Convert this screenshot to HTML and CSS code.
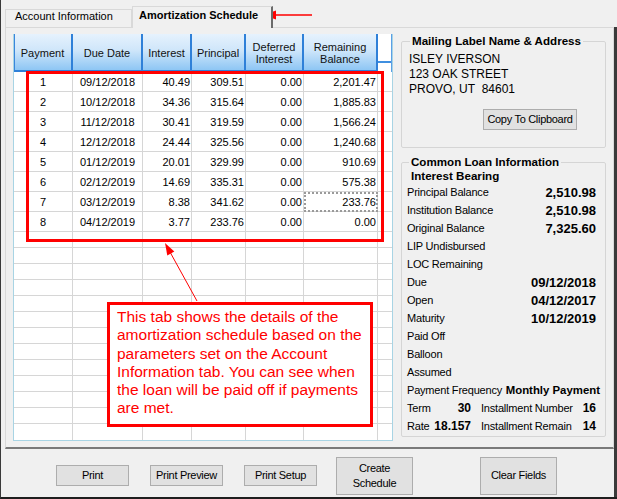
FILE: index.html
```html
<!DOCTYPE html>
<html>
<head>
<meta charset="utf-8">
<title>Amortization Schedule</title>
<link rel="stylesheet" href="styles.css">
</head>
<body>
<div class="frame">
  <div class="tabstrip">
    <div class="tab">Account Information</div>
    <div class="tab active">Amortization Schedule</div>
  </div>
  <div class="body">
    <div class="page">
      <div class="grid">
        <div class="cols ghead">
          <div class="hc first">Payment</div>
          <div class="hc">Due Date</div>
          <div class="hc">Interest</div>
          <div class="hc">Principal</div>
          <div class="hc">Deferred<br>Interest</div>
          <div class="hc">Remaining<br>Balance</div>
          <div class="hx"><div class="hx-box"></div></div>
        </div>
        <div class="cols r20"><div class="c ctr">1</div><div class="c ctr">09/12/2018</div><div class="c">40.49</div><div class="c">309.51</div><div class="c">0.00</div><div class="c">2,201.47</div><div class="c last"></div></div>
        <div class="cols r20"><div class="c ctr">2</div><div class="c ctr">10/12/2018</div><div class="c">34.36</div><div class="c">315.64</div><div class="c">0.00</div><div class="c">1,885.83</div><div class="c last"></div></div>
        <div class="cols r20"><div class="c ctr">3</div><div class="c ctr">11/12/2018</div><div class="c">30.41</div><div class="c">319.59</div><div class="c">0.00</div><div class="c">1,566.24</div><div class="c last"></div></div>
        <div class="cols r20"><div class="c ctr">4</div><div class="c ctr">12/12/2018</div><div class="c">24.44</div><div class="c">325.56</div><div class="c">0.00</div><div class="c">1,240.68</div><div class="c last"></div></div>
        <div class="cols r20"><div class="c ctr">5</div><div class="c ctr">01/12/2019</div><div class="c">20.01</div><div class="c">329.99</div><div class="c">0.00</div><div class="c">910.69</div><div class="c last"></div></div>
        <div class="cols r20"><div class="c ctr">6</div><div class="c ctr">02/12/2019</div><div class="c">14.69</div><div class="c">335.31</div><div class="c">0.00</div><div class="c">575.38</div><div class="c last"></div></div>
        <div class="cols r20"><div class="c ctr">7</div><div class="c ctr">03/12/2019</div><div class="c">8.38</div><div class="c">341.62</div><div class="c">0.00</div><div class="c focus">233.76</div><div class="c last"></div></div>
        <div class="cols r20"><div class="c ctr">8</div><div class="c ctr">04/12/2019</div><div class="c">3.77</div><div class="c">233.76</div><div class="c">0.00</div><div class="c">0.00</div><div class="c last"></div></div>
        <div class="cols r16"><div class="c"></div><div class="c"></div><div class="c"></div><div class="c"></div><div class="c"></div><div class="c"></div><div class="c last"></div></div>
        <div class="cols r16"><div class="c"></div><div class="c"></div><div class="c"></div><div class="c"></div><div class="c"></div><div class="c"></div><div class="c last"></div></div>
        <div class="cols r16"><div class="c"></div><div class="c"></div><div class="c"></div><div class="c"></div><div class="c"></div><div class="c"></div><div class="c last"></div></div>
        <div class="cols r16"><div class="c"></div><div class="c"></div><div class="c"></div><div class="c"></div><div class="c"></div><div class="c"></div><div class="c last"></div></div>
        <div class="cols r16"><div class="c"></div><div class="c"></div><div class="c"></div><div class="c"></div><div class="c"></div><div class="c"></div><div class="c last"></div></div>
        <div class="cols r16"><div class="c"></div><div class="c"></div><div class="c"></div><div class="c"></div><div class="c"></div><div class="c"></div><div class="c last"></div></div>
        <div class="cols r16"><div class="c"></div><div class="c"></div><div class="c"></div><div class="c"></div><div class="c"></div><div class="c"></div><div class="c last"></div></div>
        <div class="cols r16"><div class="c"></div><div class="c"></div><div class="c"></div><div class="c"></div><div class="c"></div><div class="c"></div><div class="c last"></div></div>
        <div class="cols r16"><div class="c"></div><div class="c"></div><div class="c"></div><div class="c"></div><div class="c"></div><div class="c"></div><div class="c last"></div></div>
        <div class="cols r16"><div class="c"></div><div class="c"></div><div class="c"></div><div class="c"></div><div class="c"></div><div class="c"></div><div class="c last"></div></div>
        <div class="cols r16"><div class="c"></div><div class="c"></div><div class="c"></div><div class="c"></div><div class="c"></div><div class="c"></div><div class="c last"></div></div>
        <div class="cols r16"><div class="c"></div><div class="c"></div><div class="c"></div><div class="c"></div><div class="c"></div><div class="c"></div><div class="c last"></div></div>
        <div class="cols r16 endrow"><div class="c"></div><div class="c"></div><div class="c"></div><div class="c"></div><div class="c"></div><div class="c"></div><div class="c last"></div></div>
      </div>

      <div class="side">
        <fieldset class="fs fs1">
          <legend>Mailing Label Name &amp; Address</legend>
          <div class="addr">ISLEY IVERSON<br>123 OAK STREET<br>PROVO, UT&nbsp; 84601</div>
          <button class="btn copy">Copy To Clipboard</button>
        </fieldset>
        <fieldset class="fs fs2">
          <legend>Common Loan Information</legend>
          <div class="ib">Interest Bearing</div>
          <div class="kvs">
            <div class="kv"><span>Principal Balance</span><b class="big">2,510.98</b></div>
            <div class="kv"><span>Institution Balance</span><b class="big">2,510.98</b></div>
            <div class="kv"><span>Original Balance</span><b class="big">7,325.60</b></div>
            <div class="kv"><span>LIP Undisbursed</span></div>
            <div class="kv"><span>LOC Remaining</span></div>
            <div class="kv"><span>Due</span><b class="big">09/12/2018</b></div>
            <div class="kv"><span>Open</span><b class="big">04/12/2017</b></div>
            <div class="kv"><span>Maturity</span><b class="big">10/12/2019</b></div>
            <div class="kv"><span>Paid Off</span></div>
            <div class="kv"><span>Balloon</span></div>
            <div class="kv"><span>Assumed</span></div>
            <div class="kv wide"><span>Payment Frequency</span><b class="sm">Monthly Payment</b></div>
            <div class="kv">
              <div class="half1"><span>Term</span><b class="mid">30</b></div>
              <div class="half2"><span>Installment Number</span><b class="mid">16</b></div>
            </div>
            <div class="kv">
              <div class="half1"><span>Rate</span><b class="mid">18.157</b></div>
              <div class="half2"><span>Installment Remain</span><b class="mid">14</b></div>
            </div>
          </div>
        </fieldset>
      </div>
    </div>

    <div class="buttons">
      <button class="btn small b-print">Print</button>
      <button class="btn small b-preview">Print Preview</button>
      <button class="btn small b-setup">Print Setup</button>
      <button class="btn large b-create">Create<br>Schedule</button>
      <button class="btn large b-clear">Clear Fields</button>
    </div>
  </div>

  <div class="annot">
    <svg class="annot-svg" width="617" height="499" viewBox="0 0 617 499">
      <line x1="274" y1="15" x2="312" y2="15" stroke="#ff0000" stroke-width="1.3"/>
      <polygon points="263,15 276,10.5 276,19.5" fill="#ff0000"/>
      <rect x="27.5" y="72.5" width="355" height="168" fill="none" stroke="#ff0000" stroke-width="3"/>
      <line x1="197" y1="301" x2="170" y2="252" stroke="#ff0000" stroke-width="1"/>
      <polygon points="165,243 167.3,255.4 174.3,251.6" fill="#ff0000"/>
    </svg>
    <div class="callout">This tab shows the details of the<br>amortization schedule based on the<br>parameters set on the Account<br>Information tab. You can see when<br>the loan will be paid off if payments<br>are met.</div>
  </div>
</div>
</body>
</html>
```

FILE: styles.css
```css
* { box-sizing: border-box; }
html, body { margin: 0; padding: 0; }
body {
  width: 617px;
  height: 499px;
  overflow: hidden;
  background: #f0f0f0;
  font-family: "Liberation Sans", Arial, sans-serif;
  color: #000;
}

.frame {
  position: relative;
  width: 617px;
  height: 499px;
  background: #f0f0f0;
  border-left: 1px solid #3a3a3a;
  border-bottom: 2px solid #1e1e1e;
  display: flex;
  flex-direction: column;
}

/* tabs */
.tabstrip {
  height: 27px;
  display: flex;
  align-items: flex-end;
  padding-left: 4px;
  font-size: 11px;
  flex: none;
}
.tab {
  height: 18px;
  width: 127px;
  border: 1px solid #d9d9d9;
  border-bottom: none;
  padding-left: 9px;
  line-height: 12px;
  white-space: nowrap;
  background: #f0f0f0;
}
.tab.active {
  position: relative;
  z-index: 1;
  height: 22px;
  width: 141px;
  margin-bottom: -1px;
  border-right: 2px solid #6b6b6b;
  padding-left: 6px;
  padding-top: 1px;
  line-height: 14px;
  font-weight: bold;
}

.body {
  flex: 1;
  display: flex;
  flex-direction: column;
  border-right: 3px solid #3a3a3a;
}

.page {
  margin-left: 4px;
  display: flex;
  gap: 8px;
  padding: 6px 7px 6px 7px;
  border-top: 1px solid #d9d9d9;
  border-left: 1px solid #d9d9d9;
  border-right: 1px solid #d9d9d9;
  border-bottom: 2px solid #7a7a7a;
}

/* grid */
.grid {
  width: 380px;
  height: 407px;
  flex: none;
  background: #fff;
  border: 1px solid #a8d4e4;
  border-top: none;
  overflow: hidden;
}
.cols {
  display: grid;
  grid-template-columns: 59px 70px 49px 54px 58px 74px 14px;
}
.ghead { height: 38px; }
.hc {
  background: linear-gradient(#e6f2fd, #cfe6fa 45%, #8ec6f4);
  border-right: 2px solid #2f80d8;
  border-bottom: 2px solid #2f80d8;
  display: flex;
  align-items: center;
  justify-content: center;
  text-align: center;
  font-size: 11px;
  line-height: 12px;
  color: #111;
  padding-top: 1px;
}
.hc.first { box-shadow: inset 1px 0 0 #3a86dc; }
.hx {
  background: #fff;
  border-right: 1px solid #5a9fe6;
}
.hx-box {
  height: 29px;
  border-bottom: 2px solid #3f8fe0;
}
.r20 { height: 20px; }
.r16 { height: 16px; }
.c {
  border-right: 1px solid #d6d6d6;
  border-bottom: 1px solid #d6d6d6;
  font-size: 11px;
  display: flex;
  align-items: center;
  justify-content: flex-end;
  padding-right: 1px;
  white-space: nowrap;
}
.c.ctr { justify-content: center; padding-right: 0; }
.c.last { border-right: none; }
.endrow .c { border-bottom: none; }
.c.focus {
  outline: 2px dotted #9a9a9a;
  outline-offset: -2px;
}

/* side panel */
.side {
  width: 205px;
  flex: none;
  display: flex;
  flex-direction: column;
  gap: 7px;
}
.fs {
  margin: 0;
  min-width: 0;
  border: 1px solid #d5d5d5;
  border-radius: 2px;
}
.fs legend {
  font-weight: bold;
  font-size: 11.6px;
  line-height: 14px;
  padding: 0 2px;
  white-space: nowrap;
}
.fs1 { padding: 4px 9px 17px 7px; }
.fs1 legend { margin-left: 1px; }
.addr {
  font-size: 12px;
  line-height: 15px;
}
.btn {
  font-family: "Liberation Sans", Arial, sans-serif;
  font-size: 11px;
  letter-spacing: -0.3px;
  color: #000;
  background: #e1e1e1;
  border: 1px solid #adadad;
  border-radius: 0;
  padding: 0;
  margin: 0;
  line-height: 15px;
  text-align: center;
}
.copy {
  display: block;
  width: 94px;
  height: 21px;
  margin: 12px 0 0 74px;
}

.fs2 { padding: 0 9px 1px 5px; }
.fs2 legend { margin-left: 2px; }
.ib {
  font-weight: bold;
  font-size: 11.6px;
  line-height: 13px;
  margin-left: 4px;
}
.kvs { margin-top: 1px; }
.kv {
  height: 18px;
  display: flex;
  align-items: center;
  justify-content: space-between;
  font-size: 11px;
  letter-spacing: -0.2px;
  white-space: nowrap;
}
.kv b { letter-spacing: 0; }
.kv b.big { font-size: 13px; }
.kv b.mid { font-size: 12px; }
.kv b.sm { font-size: 11.4px; }
.kv.wide { margin-right: -4px; }
.half1 {
  width: 64px;
  display: flex;
  justify-content: space-between;
  align-items: center;
}
.half2 {
  flex: 1;
  margin-left: 10px;
  display: flex;
  justify-content: space-between;
  align-items: center;
}

/* bottom buttons */
.buttons {
  flex: 1;
  display: flex;
  align-items: center;
  padding-top: 5px;
}
.btn.small { width: 73px; height: 21px; }
.btn.large { width: 77px; height: 38px; }
.b-print { margin-left: 55px; }
.b-preview { margin-left: 21px; }
.b-setup { margin-left: 21px; }
.b-create { margin-left: 19px; }
.b-clear { margin-left: 67px; width: 78px; }

/* annotations overlay */
.annot {
  position: absolute;
  left: -1px;
  top: 0;
  width: 617px;
  height: 499px;
  pointer-events: none;
}
.annot-svg {
  position: absolute;
  left: 0;
  top: 0;
}
.callout {
  position: absolute;
  left: 107px;
  top: 302px;
  width: 266px;
  height: 125px;
  border: 3px solid #ff0000;
  background: #fff;
  color: #ff0000;
  font-size: 15.5px;
  line-height: 18.3px;
  padding: 3px 0 0 7px;
  white-space: nowrap;
}
```
